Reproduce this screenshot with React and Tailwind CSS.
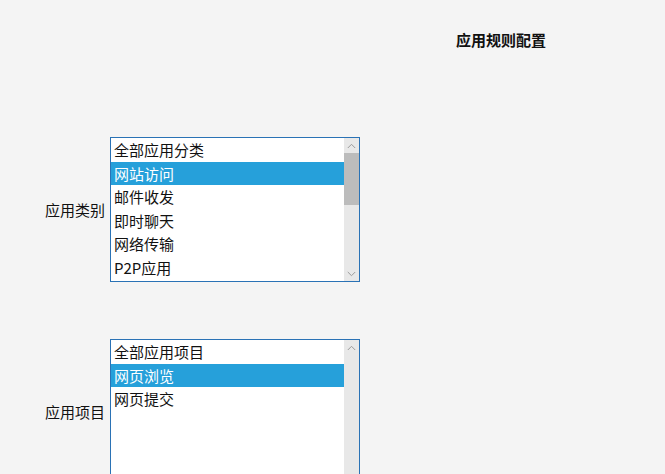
import React from "react";

function Chevron({ up }) {
  return (
    <svg width="9" height="6" viewBox="0 0 9 6" className="block">
      <path
        d={up ? "M0.8 5 L4.5 1.3 L8.2 5" : "M0.8 1 L4.5 4.7 L8.2 1"}
        fill="none"
        stroke="#9a9a9a"
        strokeWidth="1"
      />
    </svg>
  );
}

function ListBox({ items, selected, thumb }) {
  return (
    <div className="flex w-[250px] h-[145px] shrink-0 border border-[#2a72b5] bg-white">
      <div className="flex-1 flex flex-col overflow-hidden">
        {items.map((t, i) => (
          <div
            key={i}
            className={
              "h-[23.6px] shrink-0 pl-[3px] leading-[23px] whitespace-nowrap " +
              (i === selected ? "bg-[#26a0da] text-white" : "text-[#111]")
            }
          >
            {t}
          </div>
        ))}
      </div>
      <div className="w-[15px] shrink-0 bg-[#e8e8e8] flex flex-col">
        <div className="h-[15px] flex items-center justify-center">
          <Chevron up />
        </div>
        {thumb ? <div className="h-[52px] bg-[#bcbcbc]" /> : null}
        <div className="flex-1" />
        <div className="h-[15px] flex items-center justify-center">
          <Chevron />
        </div>
      </div>
    </div>
  );
}

export default function App() {
  return (
    <div
      className="min-h-[474px] h-[474px] overflow-hidden bg-[#f4f4f4] text-[15px]"
      style={{ fontFamily: '"Noto Sans CJK SC", "Noto Sans", sans-serif' }}
    >
      <div className="pt-[30px] pl-[456px] font-bold leading-[20px] text-[#111]">
        应用规则配置
      </div>
      <div className="mt-[87px] pl-[45px] flex flex-col gap-[57px]">
        <div className="flex items-center gap-[5px]">
          <div className="w-[60px] text-[#111] leading-[20px] whitespace-nowrap">应用类别</div>
          <ListBox
            items={["全部应用分类", "网站访问", "邮件收发", "即时聊天", "网络传输", "P2P应用"]}
            selected={1}
            thumb
          />
        </div>
        <div className="flex items-center gap-[5px]">
          <div className="w-[60px] text-[#111] leading-[20px] whitespace-nowrap">应用项目</div>
          <ListBox items={["全部应用项目", "网页浏览", "网页提交"]} selected={1} />
        </div>
      </div>
    </div>
  );
}
